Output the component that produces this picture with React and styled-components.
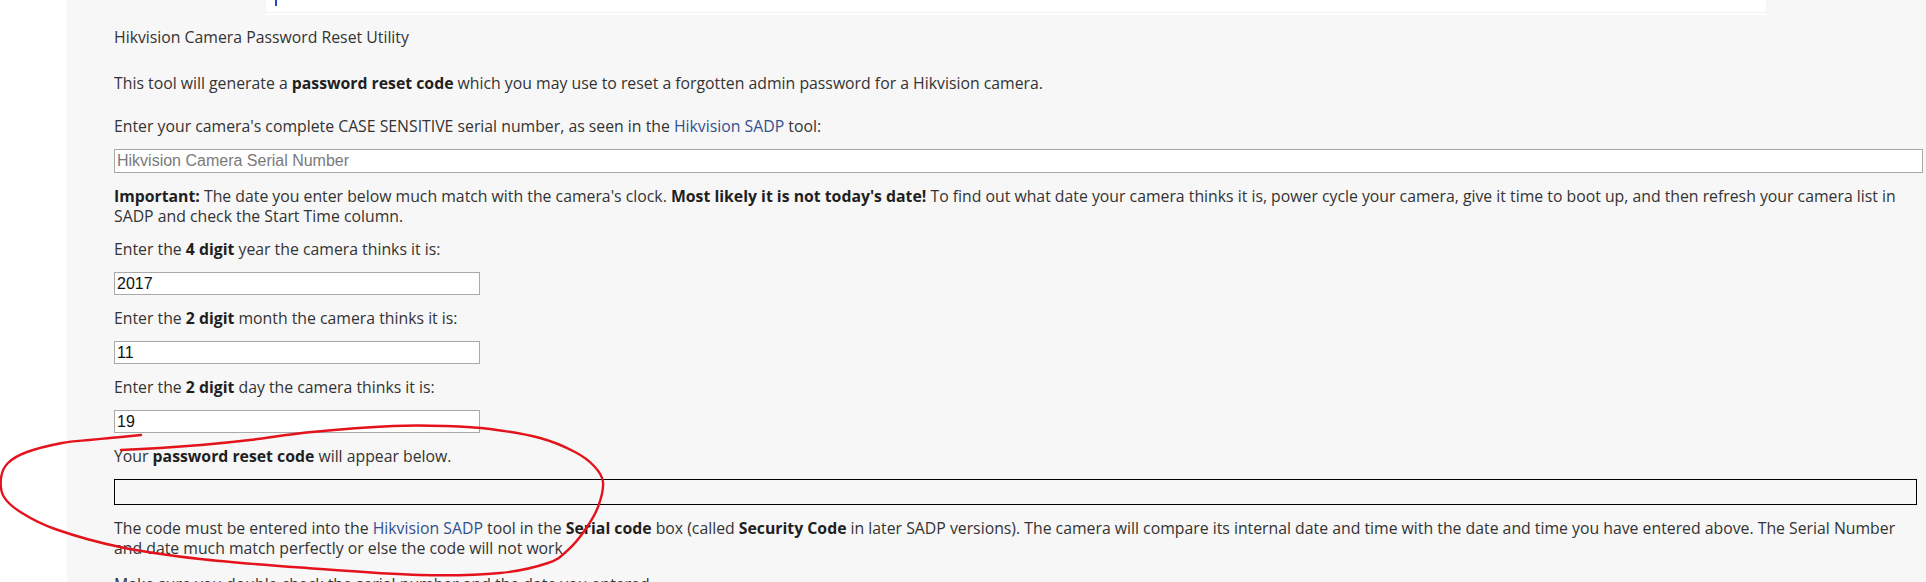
import React from "react";
import styled, { createGlobalStyle } from "styled-components";

const Global = createGlobalStyle`
  html, body { margin: 0; padding: 0; background: #ffffff; overflow: hidden; }
  body { font-family: "Open Sans", "Noto Sans", sans-serif; }
`;

const Page = styled.div`
  position: relative;
  width: 1926px;
  height: 582px;
  overflow: hidden;
`;

const Panel = styled.main`
  margin-left: 67px;
  min-height: 582px;
  background: #f7f7f7;
  padding: 0 9px 0 47px;
`;

const TopStrip = styled.div`
  margin-left: 152px;
  width: 1500px;
  height: 12px;
  background: #ffffff;
  border-bottom: 1px solid #f0f0f0;
  margin-bottom: 2px;
  box-shadow: 0 2px 0 #ffffff;
`;

const Caret = styled.span`
  display: block;
  margin-left: 9px;
  width: 2px;
  height: 6px;
  background: #2347c9;
`;

const Content = styled.div`
  display: flex;
  flex-direction: column;
  gap: 13px;
  padding-top: 12px;
  font-size: 15.8px;
  line-height: 20px;
  color: #333333;
`;

const Para = styled.p`
  margin: ${(p) => p.$before || 0}px 0 ${(p) => p.$after || 0}px 0;
  white-space: nowrap;
`;

const B = styled.b`
  font-weight: 700;
  color: #1f1f1f;
`;

const Link = styled.a`
  color: #32508f;
  text-decoration: none;
`;

const TextInput = styled.input`
  box-sizing: border-box;
  width: ${(p) => (p.$short ? "366px" : "calc(100% + 6px)")};
  height: ${(p) => (p.$short ? 23 : 24)}px;
  margin: 0;
  padding: 1px 2px;
  border: 1px solid #a9a9a9;
  background: #ffffff;
  font-family: "Liberation Sans", Arial, sans-serif;
  font-size: 16px;
  color: #111111;
  outline: none;
  &::placeholder { color: #7a7a7a; opacity: 1; }
`;

const CodeBox = styled.div`
  box-sizing: border-box;
  width: 100%;
  height: 26px;
  border: 1px solid #000000;
  background: #f7f7f7;
`;

const Annotation = styled.svg`
  position: absolute;
  left: 0;
  top: 0;
  width: 1926px;
  height: 582px;
  pointer-events: none;
`;

const strokePoints = [
  [141, 435], [110, 438], [89, 440], [62, 443], [27, 452], [8, 463], [1, 478],
  [4, 497], [22, 513], [55, 529], [120, 547], [200, 559], [307, 568],
  [420, 575], [500, 573], [548, 563], [568, 550], [585, 530], [598, 507],
  [603, 482], [594, 466], [575, 452], [540, 438], [490, 429], [446, 426],
  [393, 426], [312, 432], [250, 440], [201, 445], [160, 448], [121, 450],
];

function smooth(pts) {
  let d = `M${pts[0][0]},${pts[0][1]}`;
  for (let i = 0; i < pts.length - 1; i++) {
    const p0 = pts[i - 1] || pts[i];
    const p1 = pts[i];
    const p2 = pts[i + 1];
    const p3 = pts[i + 2] || p2;
    const c1x = p1[0] + (p2[0] - p0[0]) / 6;
    const c1y = p1[1] + (p2[1] - p0[1]) / 6;
    const c2x = p2[0] - (p3[0] - p1[0]) / 6;
    const c2y = p2[1] - (p3[1] - p1[1]) / 6;
    d += ` C${c1x.toFixed(1)},${c1y.toFixed(1)} ${c2x.toFixed(1)},${c2y.toFixed(1)} ${p2[0]},${p2[1]}`;
  }
  return d;
}

export default function App() {
  return (
    <Page>
      <Global />
      <Panel>
        <TopStrip>
          <Caret />
        </TopStrip>
        <Content>
          <Para $after={13}>Hikvision Camera Password Reset Utility</Para>
          <Para $after={10}>
            This tool will generate a <B>password reset code</B> which you may use to reset a forgotten admin password for a Hikvision camera.
          </Para>
          <Para>
            Enter your camera's complete CASE SENSITIVE serial number, as seen in the <Link href="#">Hikvision SADP</Link> tool:
          </Para>
          <TextInput placeholder="Hikvision Camera Serial Number" />
          <Para>
            <B>Important:</B> The date you enter below much match with the camera's clock. <B>Most likely it is not today's date!</B> To find out what date your camera thinks it is, power cycle your camera, give it time to boot up, and then refresh your camera list in
            <br />
            SADP and check the Start Time column.
          </Para>
          <Para>
            Enter the <B>4 digit</B> year the camera thinks it is:
          </Para>
          <TextInput $short defaultValue="2017" />
          <Para>
            Enter the <B>2 digit</B> month the camera thinks it is:
          </Para>
          <TextInput $short defaultValue="11" />
          <Para>
            Enter the <B>2 digit</B> day the camera thinks it is:
          </Para>
          <TextInput $short defaultValue="19" />
          <Para>
            Your <B>password reset code</B> will appear below.
          </Para>
          <CodeBox />
          <Para>
            The code must be entered into the <Link href="#">Hikvision SADP</Link> tool in the <B>Serial code</B> box (called <B>Security Code</B> in later SADP versions). The camera will compare its internal date and time with the date and time you have entered above. The Serial Number
            <br />
            and date much match perfectly or else the code will not work.
          </Para>
          <Para $before={3}>Make sure you double check the serial number and the date you entered.</Para>
        </Content>
      </Panel>
      <Annotation viewBox="0 0 1926 582">
        <path d={smooth(strokePoints)} fill="none" stroke="#e3121b" strokeWidth="2.4" strokeLinecap="round" strokeLinejoin="round" />
      </Annotation>
    </Page>
  );
}
